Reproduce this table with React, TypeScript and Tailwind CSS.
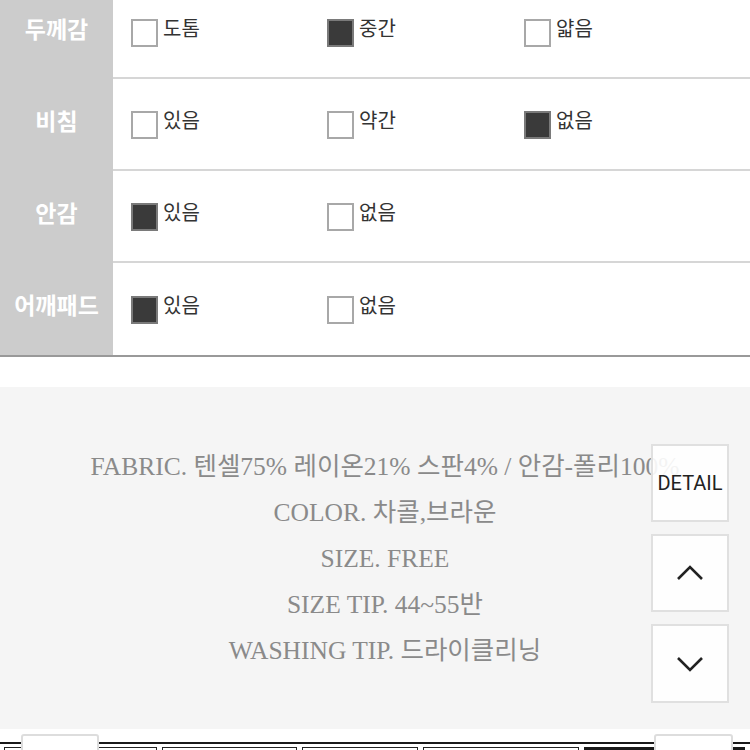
const rows = [
  { label: "두께감", opts: [["도톰", false], ["중간", true], ["얇음", false]] },
  { label: "비침", opts: [["있음", false], ["약간", false], ["없음", true]] },
  { label: "안감", opts: [["있음", true], ["없음", false]] },
  { label: "어깨패드", opts: [["있음", true], ["없음", false]] },
] as { label: string; opts: [string, boolean][] }[];

const info = [
  "FABRIC. 텐셀75% 레이온21% 스판4% / 안감-폴리100%",
  "COLOR. 차콜,브라운",
  "SIZE. FREE",
  "SIZE TIP. 44~55반",
  "WASHING TIP. 드라이클리닝",
];

function Check({ on }: { on: boolean }) {
  return (
    <span
      className={
        "block w-[27px] h-[28px] shrink-0 border-2 " +
        (on ? "bg-[#3a3a3a] border-[#7a7a7a]" : "bg-white border-[#a8a8a8]")
      }
    />
  );
}

function Chevron({ up }: { up: boolean }) {
  return (
    <svg width="28" height="16" viewBox="0 0 28 16" fill="none" stroke="#222" strokeWidth="2.6">
      <path d={up ? "M2 14 L14 2 L26 14" : "M2 2 L14 14 L26 2"} />
    </svg>
  );
}

export default function App() {
  return (
    <div className="relative w-[750px] bg-white overflow-hidden" style={{ fontFamily: '"Noto Sans CJK KR", sans-serif' }}>
      <div className="-mt-[13px] border-b-2 border-[#999]">
        {rows.map((r, i) => (
          <div key={r.label} className="flex h-[92px]">
            <div className="w-[113px] shrink-0 bg-[#cccccc] flex items-center justify-center pb-[9px] text-white font-bold text-[23px] leading-none">
              {r.label}
            </div>
            <div
              className={
                "flex-1 grid grid-cols-[196px_197px_1fr] pl-[18px] pt-[1px] items-center " +
                (i < rows.length - 1 ? "border-b-2 border-[#d6d6d6]" : "")
              }
            >
              {r.opts.map(([t, on]) => (
                <div key={t} className="flex items-start gap-[5px]">
                  <Check on={on} />
                  <span className="text-[20px] leading-none text-[#333] -mt-[1px]">{t}</span>
                </div>
              ))}
            </div>
          </div>
        ))}
      </div>

      <div className="h-[30px] bg-white" />

      <div className="relative h-[342px] bg-[#f5f5f5] pt-[57px] pl-[20px]">
        {info.map((t) => (
          <p
            key={t}
            className="text-center text-[25.5px] leading-[46px] text-[#8a8a8a] whitespace-nowrap"
            style={{ fontFamily: '"Liberation Serif", "Noto Sans CJK KR", serif' }}
          >
            {t}
          </p>
        ))}
        <div className="absolute top-[57px] right-[21px] flex flex-col gap-[12px]">
          <div className="w-[78px] h-[78px] bg-white/90 border-2 border-[#e0e0e0] flex items-center justify-center text-[20px] text-[#222]" style={{ fontFamily: "Roboto, sans-serif" }}>
            DETAIL
          </div>
          <div className="w-[78px] h-[78px] bg-white/90 border-2 border-[#e0e0e0] flex items-center justify-center">
            <Chevron up />
          </div>
          <div className="w-[78px] h-[79px] bg-white/90 border-2 border-[#e0e0e0] flex items-center justify-center">
            <Chevron up={false} />
          </div>
        </div>
      </div>

      <div className="h-[13px] bg-white" />
      <div className="border-t-2 border-[#1a1a1a] flex gap-[5px] pt-[3px] pl-[4px] pr-[5px] bg-white">
        <div className="w-[153px] h-[40px] border border-[#222]" />
        <div className="w-[135px] h-[40px] border border-[#222]" />
        <div className="w-[116px] h-[40px] border border-[#222]" />
        <div className="w-[156px] h-[40px] border border-[#222]" />
        <div className="flex-1 h-[40px] bg-[#1a1a1a]" />
      </div>

      <div className="absolute top-[734px] left-[21px] w-[78px] h-[40px] bg-white border-2 border-[#dddddd] rounded-t-[3px]" />
      <div className="absolute top-[734px] left-[654px] w-[79px] h-[40px] bg-white border-2 border-[#dddddd] rounded-t-[3px]" />
    </div>
  );
}
